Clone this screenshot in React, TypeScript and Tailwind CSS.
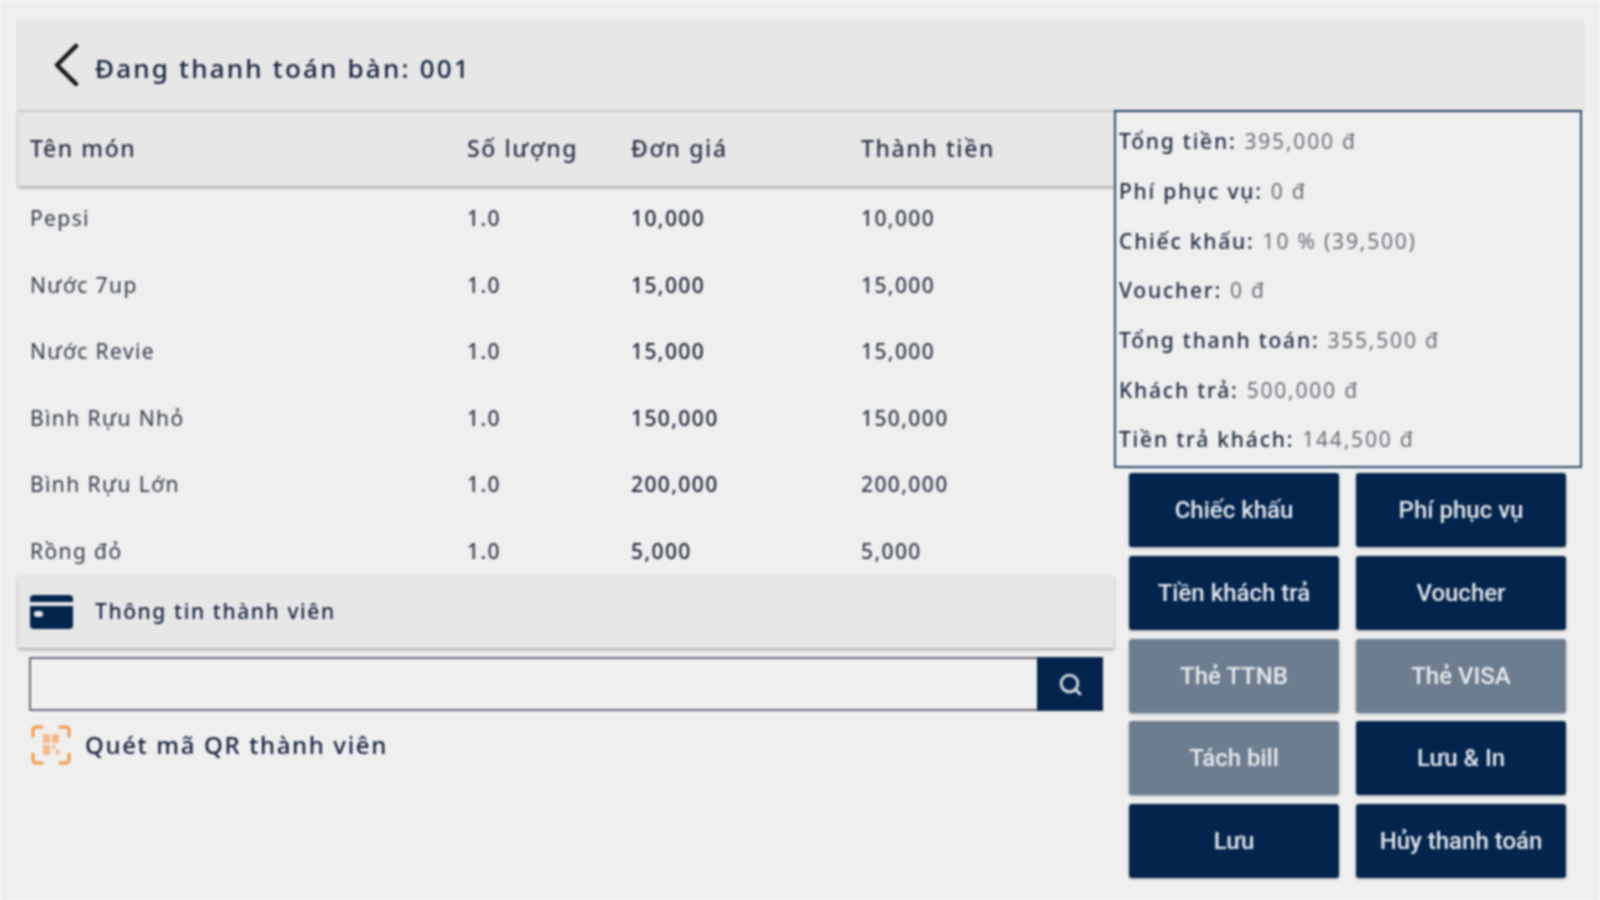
import { Search } from "lucide-react";

const ITEMS = [
  { name: "Pepsi", qty: "1.0", price: "10,000", total: "10,000" },
  { name: "Nước 7up", qty: "1.0", price: "15,000", total: "15,000" },
  { name: "Nước Revie", qty: "1.0", price: "15,000", total: "15,000" },
  { name: "Bình Rựu Nhỏ", qty: "1.0", price: "150,000", total: "150,000" },
  { name: "Bình Rựu Lớn", qty: "1.0", price: "200,000", total: "200,000" },
  { name: "Rồng đỏ", qty: "1.0", price: "5,000", total: "5,000" },
];

const SUMMARY = [
  ["Tổng tiền:", "395,000 đ"],
  ["Phí phục vụ:", "0 đ"],
  ["Chiếc khấu:", "10 % (39,500)"],
  ["Voucher:", "0 đ"],
  ["Tổng thanh toán:", "355,500 đ"],
  ["Khách trả:", "500,000 đ"],
  ["Tiền trả khách:", "144,500 đ"],
];

const ACTIONS = [
  { label: "Chiếc khấu", muted: false },
  { label: "Phí phục vụ", muted: false },
  { label: "Tiền khách trả", muted: false },
  { label: "Voucher", muted: false },
  { label: "Thẻ TTNB", muted: true },
  { label: "Thẻ VISA", muted: true },
  { label: "Tách bill", muted: true },
  { label: "Lưu & In", muted: false },
  { label: "Lưu", muted: false },
  { label: "Hủy thanh toán", muted: false },
];

function CardIcon() {
  return (
    <svg width="43" height="34" viewBox="0 0 43 34" className="shrink-0">
      <path d="M4 0h35a4 4 0 0 1 4 4v3H0V4a4 4 0 0 1 4-4z" fill="#03244d" />
      <path d="M0 11h43v19a4 4 0 0 1-4 4H4a4 4 0 0 1-4-4z" fill="#03244d" />
      <rect x="4" y="16" width="9" height="6" rx="3" fill="#e8e8e8" />
    </svg>
  );
}

function QrIcon() {
  return (
    <svg width="40" height="40" viewBox="0 0 40 40" fill="none" className="shrink-0">
      <g stroke="#f2994a" strokeWidth="3" strokeLinecap="round" strokeLinejoin="round">
        <path d="M2 11V5a3 3 0 0 1 3-3h6" />
        <path d="M29 2h6a3 3 0 0 1 3 3v6" />
        <path d="M38 29v6a3 3 0 0 1-3 3h-6" />
        <path d="M11 38H5a3 3 0 0 1-3-3v-6" />
      </g>
      <g fill="#f6b98a">
        <rect x="12" y="9" width="7" height="9" />
        <rect x="21" y="9" width="7" height="9" />
        <rect x="12" y="20" width="7" height="10" />
        <rect x="21" y="20" width="3" height="4" />
        <rect x="25" y="24" width="3" height="6" />
      </g>
    </svg>
  );
}

export default function App() {
  return (
    <div className="h-[900px] w-[1600px] overflow-hidden bg-[#efefef] px-[18px] pt-[20px] font-['Noto_Sans',sans-serif] text-[#14213d] blur-[0.8px]">
      {/* Header */}
      <div className="relative z-10 flex h-[90px] w-[1565px] items-center gap-[15px] bg-[#e7e7e7] pl-[34px] shadow-[0_1px_2px_rgba(0,0,0,0.25)]">
        <svg width="28" height="44" viewBox="0 0 28 44" fill="none" className="shrink-0">
          <path d="M24 3L5 22l19 19" stroke="#1a1a1a" strokeWidth="4.5" strokeLinecap="round" strokeLinejoin="round" />
        </svg>
        <span className="translate-y-[3px] text-[26px] font-medium tracking-[2.2px]">Đang thanh toán bàn: 001</span>
      </div>

      <div className="flex">
        {/* Left column */}
        <div className="w-[1096px] shrink-0">
          <div className="grid h-[76px] grid-cols-[437px_164px_230px_1fr] items-center bg-[#e7e7e7] pl-[12px] text-[23px] font-medium tracking-[1.6px] text-[#2a2f45] shadow-[0_2px_3px_rgba(0,0,0,0.3)]">
            <span>Tên món</span>
            <span>Số lượng</span>
            <span>Đơn giá</span>
            <span>Thành tiền</span>
          </div>

          <div className="h-[389px] overflow-hidden">
            {ITEMS.map((item) => (
              <div
                key={item.name}
                className="grid h-[66.6px] grid-cols-[437px_164px_230px_1fr] items-center border-b border-[#f4f4f4] pl-[12px] text-[21px] tracking-[1.4px] text-[#333a4a]"
              >
                <span>{item.name}</span>
                <span className="font-medium">{item.qty}</span>
                <span className="font-medium text-[#1b2233]">{item.price}</span>
                <span className="font-medium">{item.total}</span>
              </div>
            ))}
          </div>

          <div className="flex h-[73px] items-center gap-[22px] bg-[#e7e7e7] pl-[12px] shadow-[0_2px_3px_rgba(0,0,0,0.3)]">
            <CardIcon />
            <span className="text-[21px] font-medium tracking-[1.6px]">Thông tin thành viên</span>
          </div>

          <div className="mt-[9px] flex h-[54px] pl-[11px] pr-[11px]">
            <div className="flex-1 rounded-l-[2px] border-2 border-r-0 border-[#6b6b78] bg-[#f0f0f0]" />
            <button className="flex w-[66px] items-center justify-center bg-[#03244d]">
              <Search size={25} strokeWidth={2.8} className="text-[#d5dae2]" />
            </button>
          </div>

          <div className="mt-[14px] flex items-center gap-[14px] pl-[13px]">
            <QrIcon />
            <span className="text-[24px] font-medium tracking-[1.65px]">Quét mã QR thành viên</span>
          </div>
        </div>

        {/* Right column */}
        <div className="w-[468px] shrink-0">
          <div className="flex h-[358px] flex-col justify-between border-2 border-[#2b4a70] pb-[11px] pl-[3px] pr-[3px] pt-[15px] text-[21px] tracking-[1.8px]">
            {SUMMARY.map(([label, value]) => (
              <div key={label} className="flex h-[30px] items-center gap-[8px]">
                <span className="font-medium text-[#1f2a40]">{label}</span>
                <span className="text-[#6a6f78]">{value}</span>
              </div>
            ))}
          </div>

          <div className="mt-[5px] grid grid-cols-[210px_210px] gap-x-[17px] gap-y-[8.8px] pl-[15px]">
            {ACTIONS.map((action) => (
              <button
                key={action.label}
                className={`h-[74px] rounded-[3px] font-['Roboto',sans-serif] text-[24px] font-medium shadow-[0_1px_3px_rgba(0,0,0,0.3)] ${
                  action.muted ? "bg-[#6c7d90] text-[#e8ebee]" : "bg-[#03244d] text-[#e4e8ee]"
                }`}
              >
                {action.label}
              </button>
            ))}
          </div>
        </div>
      </div>
    </div>
  );
}
